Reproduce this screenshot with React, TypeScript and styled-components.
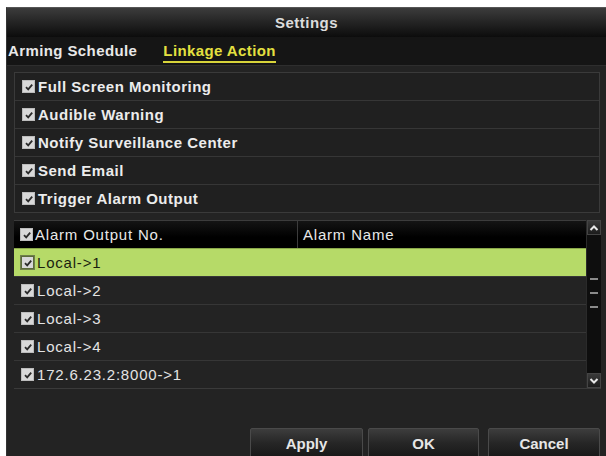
import React, { ReactElement } from "react";
import { styled, createGlobalStyle } from "styled-components";

const GlobalStyle = createGlobalStyle`
  html, body {
    margin: 0;
    padding: 0;
    background: #ffffff;
  }
  body {
    font-family: "Liberation Sans", Arial, sans-serif;
  }
`;

const linkageItems = [
  "Full Screen Monitoring",
  "Audible Warning",
  "Notify Surveillance Center",
  "Send Email",
  "Trigger Alarm Output",
];

const outputRows = ["Local->1", "Local->2", "Local->3", "Local->4", "172.6.23.2:8000->1"];

function Check({ dark }: { dark?: boolean }): ReactElement {
  return (
    <CheckBox $dark={dark}>
      <svg width="10" height="10" viewBox="0 0 10 10">
        <path d="M2 5.2 L4.2 7.4 L8.2 2.6" fill="none" stroke="#2a2a2a" strokeWidth="1.8" />
      </svg>
    </CheckBox>
  );
}

export default function App(): ReactElement {
  return (
    <>
      <GlobalStyle />
      <Page>
        <Window>
          <TitleBar>Settings</TitleBar>
          <Tabs>
            <Tab>Arming Schedule</Tab>
            <Tab $active>Linkage Action</Tab>
          </Tabs>
          <Content>
            <ActionBox>
              {linkageItems.map(item => (
                <ActionRow key={item}>
                  <Check />
                  <span>{item}</span>
                </ActionRow>
              ))}
            </ActionBox>
            <TableWrap>
              <Table>
                <HeaderRow>
                  <HeaderCell $first>
                    <Check />
                    <span>Alarm Output No.</span>
                  </HeaderCell>
                  <HeaderCell>Alarm Name</HeaderCell>
                </HeaderRow>
                {outputRows.map((row, i) => (
                  <BodyRow key={row} $selected={i === 0}>
                    <Check dark={i === 0} />
                    <span>{row}</span>
                  </BodyRow>
                ))}
              </Table>
              <ScrollBar>
                <ScrollArrow>
                  <svg width="10" height="8" viewBox="0 0 10 8">
                    <path d="M1.5 6 L5 2.5 L8.5 6" fill="none" stroke="#e8e8e8" strokeWidth="2" />
                  </svg>
                </ScrollArrow>
                <ScrollTrack>
                  <Tick />
                  <Tick />
                  <Tick />
                </ScrollTrack>
                <ScrollArrow>
                  <svg width="10" height="8" viewBox="0 0 10 8">
                    <path d="M1.5 2 L5 5.5 L8.5 2" fill="none" stroke="#e8e8e8" strokeWidth="2" />
                  </svg>
                </ScrollArrow>
              </ScrollBar>
            </TableWrap>
            <Buttons>
              <Button $width={113}>Apply</Button>
              <Button $width={111} $gap={5}>OK</Button>
              <Button $width={112} $gap={9}>Cancel</Button>
            </Buttons>
          </Content>
        </Window>
      </Page>
    </>
  );
}

const Page = styled.div`
  width: 606px;
  height: 456px;
  padding: 7px 0 0 6px;
  box-sizing: border-box;
  overflow: hidden;
  background: #ffffff;
`;

const Window = styled.div`
  width: 600px;
  height: 460px;
  background: #232323;
  display: flex;
  flex-direction: column;
  border-top: 1px solid #555;
  border-left: 1px solid #333;
  box-sizing: border-box;
`;

const TitleBar = styled.div`
  height: 29px;
  flex-shrink: 0;
  display: flex;
  align-items: center;
  justify-content: center;
  background: linear-gradient(#3c3c3c, #262626 45%, #0c0c0c);
  color: #dcdcdc;
  font-weight: bold;
  font-size: 15px;
  letter-spacing: 0.5px;
`;

const Tabs = styled.div`
  height: 28px;
  flex-shrink: 0;
  display: flex;
  align-items: center;
  gap: 26px;
  padding-left: 1px;
  background: #151515;
  border-bottom: 1px solid #2e2e2e;
`;

const Tab = styled.div<{ $active?: boolean }>`
  font-size: 15px;
  font-weight: bold;
  letter-spacing: 0.4px;
  color: ${props => (props.$active ? "#e4e040" : "#e8e8e8")};
  padding-bottom: 2px;
  margin-top: 2px;
  border-bottom: 2px solid ${props => (props.$active ? "#d8d43a" : "transparent")};
`;

const Content = styled.div`
  flex: 1;
  display: flex;
  flex-direction: column;
  padding: 6px 0 0 7px;
`;

const ActionBox = styled.div`
  width: 584px;
  border: 1px solid #3a3a3a;
  display: flex;
  flex-direction: column;
  background: #202020;
`;

const ActionRow = styled.div`
  height: 27px;
  display: flex;
  align-items: center;
  gap: 3px;
  padding-left: 7px;
  border-bottom: 1px solid #363636;
  color: #ececec;
  font-size: 15px;
  font-weight: bold;
  letter-spacing: 0.5px;

  &:last-child {
    border-bottom: none;
  }
`;

const CheckBox = styled.span<{ $dark?: boolean }>`
  width: 13px;
  height: 13px;
  flex-shrink: 0;
  display: inline-flex;
  align-items: center;
  justify-content: center;
  background: #d8d8d8;
  border: 1px solid ${props => (props.$dark ? "#5a6a3a" : "#bcbcbc")};
  box-sizing: border-box;
  outline: ${props => (props.$dark ? "1px solid #6f7f4a" : "none")};
`;

const TableWrap = styled.div`
  margin-top: 7px;
  width: 587px;
  display: flex;
  border-bottom: 1px solid #3a3a3a;
`;

const Table = styled.div`
  flex: 1;
  display: flex;
  flex-direction: column;
`;

const HeaderRow = styled.div`
  height: 27px;
  display: flex;
  background: linear-gradient(#141414, #000000 60%);
  border-top: 1px solid #3c3c3c;
`;

const HeaderCell = styled.div<{ $first?: boolean }>`
  width: ${props => (props.$first ? "277px" : "auto")};
  flex: ${props => (props.$first ? "none" : "1")};
  display: flex;
  align-items: center;
  gap: 2px;
  padding-left: ${props => (props.$first ? "6px" : "5px")};
  border-right: ${props => (props.$first ? "1px solid #3c3c3c" : "none")};
  color: #e8e8e8;
  font-size: 15px;
  letter-spacing: 0.8px;
`;

const BodyRow = styled.div<{ $selected?: boolean }>`
  height: 27px;
  display: flex;
  align-items: center;
  gap: 3px;
  padding-left: 7px;
  background: ${props => (props.$selected ? "#b6da68" : "#232323")};
  border-top: 1px solid ${props => (props.$selected ? "#8aa84a" : "#363636")};
  color: ${props => (props.$selected ? "#1a1f10" : "#e4e4e4")};
  font-size: 15px;
  letter-spacing: 0.8px;
`;

const ScrollBar = styled.div`
  width: 14px;
  display: flex;
  flex-direction: column;
  background: #151515;
  border-left: 1px solid #2a2a2a;
`;

const ScrollArrow = styled.div`
  height: 15px;
  display: flex;
  align-items: center;
  justify-content: center;
  background: linear-gradient(#3a3a3a, #1c1c1c);
  border: 1px solid #444;
  box-sizing: border-box;
`;

const ScrollTrack = styled.div`
  flex: 1;
  display: flex;
  flex-direction: column;
  align-items: center;
  padding-top: 43px;
  gap: 12px;
  background: #0e0e0e;
`;

const Tick = styled.div`
  width: 8px;
  height: 2px;
  background: #8a8a8a;
`;

const Buttons = styled.div`
  display: flex;
  justify-content: flex-end;
  margin-top: 39px;
  padding-right: 6px;
`;

const Button = styled.button<{ $width: number; $gap?: number }>`
  width: ${props => props.$width}px;
  height: 30px;
  margin-left: ${props => props.$gap ?? 0}px;
  background: linear-gradient(#3d3d3d, #262626 50%, #181818);
  border: 1px solid #4a4a4a;
  border-radius: 2px;
  color: #e6e6e6;
  font-family: "Liberation Sans", Arial, sans-serif;
  font-size: 15px;
  font-weight: bold;
  padding: 0;
  cursor: pointer;
`;
